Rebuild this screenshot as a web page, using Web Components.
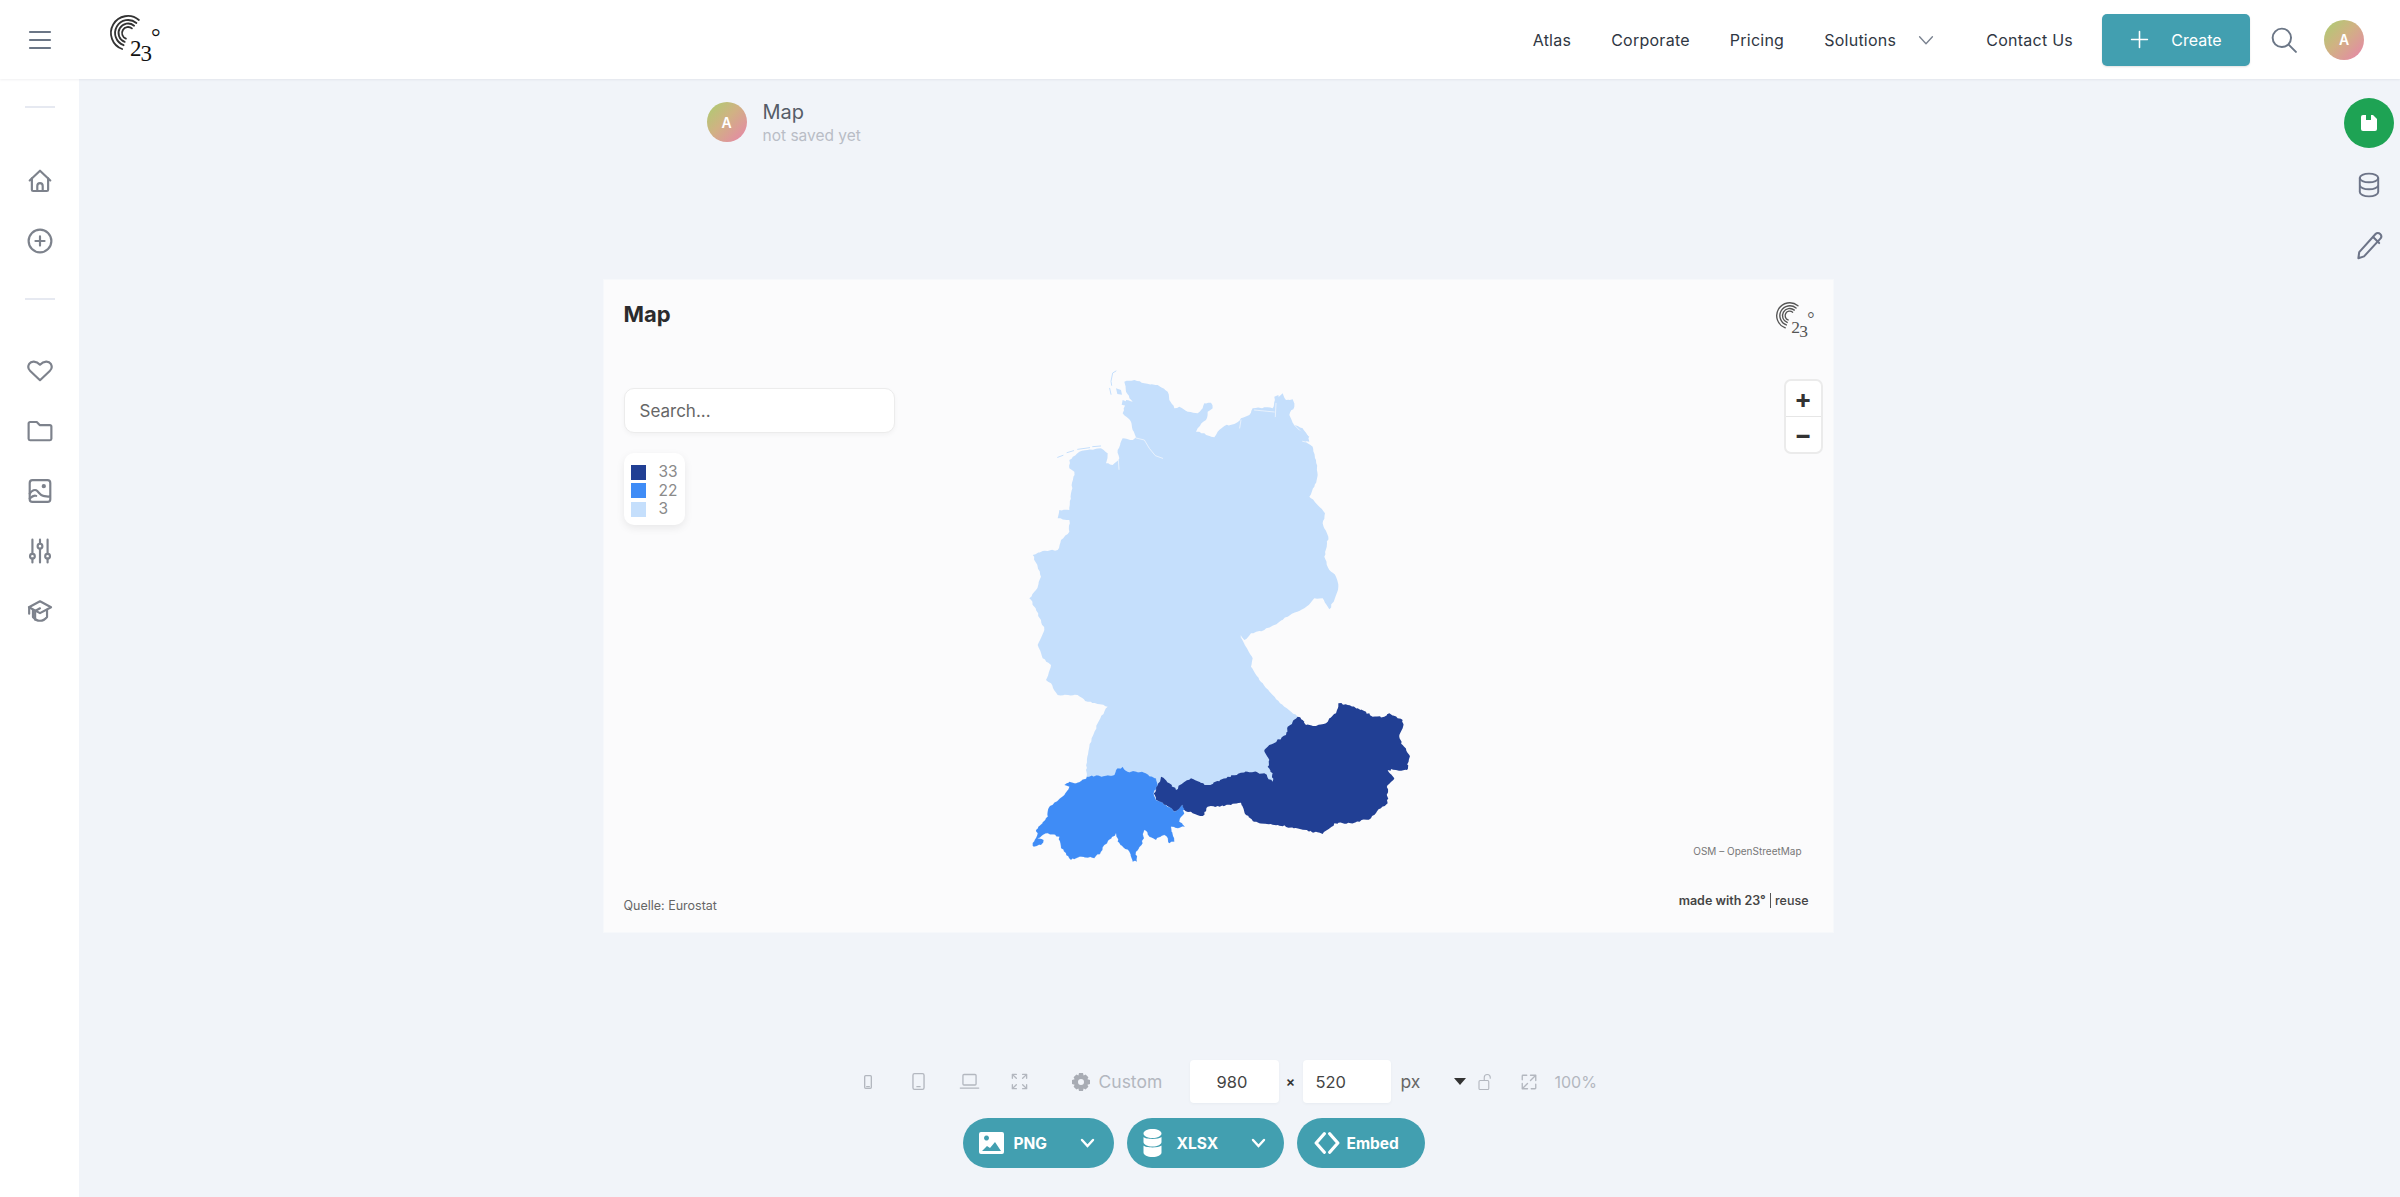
<!DOCTYPE html>
<html lang="en"><head><meta charset="utf-8"><title>Map</title>
<style>
html,body{margin:0;height:100%;background:#f1f4f9}
body{font-family:Inter,"Noto Sans",sans-serif}
</style></head>
<body>
<app-shell>
  <top-bar slot="top"></top-bar>
  <side-bar slot="side"></side-bar>
  <edit-rail slot="rail"></edit-rail>
  <doc-head></doc-head>
  <chart-card></chart-card>
  <tool-bar></tool-bar>
</app-shell>
<script>
const ICONS={
 menu:'<path d="M2 4h20M2 12h20M2 20h20"/>',
 home:'<path d="M2.5 11.5 12 2.5l9.5 9"/><path d="M4.5 9.5V20a1.2 1.2 0 0 0 1.2 1.2h12.6a1.2 1.2 0 0 0 1.2-1.2V9.5"/><path d="M9.5 21v-4.5a2.5 2.5 0 0 1 5 0V21"/>',
 plusc:'<circle cx="12" cy="12" r="10.5"/><path d="M12 7.8v8.4M7.8 12h8.4"/>',
 heart:'<path d="M12 20.5 3 12a5.3 5.3 0 0 1-1-6.5C3.800 2.700 8.500 2.500 12 6.200 15.500 2.500 20.200 2.700 22 5.500A5.300 5.300 0 0 1 21 12z"/>',
 folder:'<path d="M1.500 5a1.300 1.300 0 0 1 1.300-1.300h6.200L11.700 6.500h9.500A1.300 1.300 0 0 1 22.500 7.800v11.400a1.300 1.300 0 0 1-1.300 1.300H2.800a1.300 1.300 0 0 1-1.300-1.300z"/>',
 image:'<rect x="2.500" y="2" width="19" height="20" rx="2.500"/><circle cx="15.500" cy="7.500" r="1"/><path d="M2.500 14.500c2-3 5-4.500 7-2.500s3 4 5.500 4.500 4 1 6 .5M2.500 19c2-2 4-3.500 6-2.500"/>',
 sliders:'<path d="M5 1.500v13M5 19v3.500M12 1.500v3.500M12 10v12.500M19 1.500v13M19 19v3.500"/><circle cx="5" cy="16.800" r="2.200"/><circle cx="12" cy="7.500" r="2.200"/><circle cx="19" cy="16.800" r="2.200"/>',
 cap:'<path d="M12 3 1.800 8.500 12 14l10.200-5.500z"/><path d="M5.500 11v6.500C7.500 20 10 21 12 21s4.500-1 6.500-3.500V11"/><path d="M12 9.500 7.500 12v8"/><path d="M2 8.500v6"/>',
 search:'<circle cx="10" cy="10" r="8.500"/><path d="m16.500 16.500 6.500 6.500"/>',
 chev:'<path d="m5 8.500 7 7.500 7-7.500"/>',
 plus:'<path d="M12 2v20M2 12h20"/>',
 db:'<ellipse cx="12" cy="5.500" rx="8.500" ry="4"/><path d="M3.500 5.500v13c0 2.200 3.800 4 8.500 4s8.500-1.800 8.500-4v-13M3.500 12c0 2.200 3.800 4 8.500 4s8.500-1.800 8.500-4"/>',
 pencil:'<path d="M17 2.500c1-1 2.800-1 3.800 0s1.200 2.700.2 3.800L7.500 21 2.800 22.500 3.500 17.500z"/><path d="m15 5 5 5"/>',
 phone:'<rect x="7" y="2.500" width="10" height="19" rx="1.500"/><path d="M10 19h4"/>',
 tablet:'<rect x="5" y="2" width="14" height="20" rx="2"/><path d="M10 18.500h4"/>',
 laptop:'<rect x="4.500" y="4" width="15" height="12" rx="1.200"/><path d="M1.500 19.500h21"/>',
 expand:'<path d="M3 8V3h5M16 3h5v5M21 16v5h-5M8 21H3v-5M3 3l5 5M21 3l-5 5M21 21l-5-5M3 21l5-5"/>',
 lock:'<rect x="4" y="10" width="13" height="12" rx="1.500"/><path d="M11 10V6a4 4 0 0 1 8 0v1"/>',
 resize:'<path d="M14 3h7v7M21 3l-7 7M10 21H3v-7M3 21l7-7M3 9V4a1 1 0 0 1 1-1h5M21 15v5a1 1 0 0 1-1 1h-5"/>',
 code:'<path d="M9.500 3.500 2 12l7.500 8.500M14.500 3.500 22 12l-7.500 8.500"/>'
};
function define(name,css,html,init){
  customElements.define(name,class extends HTMLElement{
    constructor(){super();const r=this.attachShadow({mode:'open'});
      r.innerHTML='<style>'+css+'</style>'+(typeof html==='function'?html(this):html);
      if(init)init(r,this);}
  });
}
define('ui-icon',':host{display:inline-flex;line-height:0}svg{display:block;fill:none;stroke:currentColor;stroke-linecap:round;stroke-linejoin:round}',
 el=>{const s=el.getAttribute('size')||24,w=el.getAttribute('w')||2;
  return `<svg width="${s}" height="${s}" viewBox="0 0 24 24" stroke-width="${w}">${ICONS[el.getAttribute('name')]}</svg>`});
define('brand-logo',':host{display:block;line-height:0}svg{display:block;overflow:visible}text{font-family:"Liberation Serif",serif}',
 el=>{const s=+el.getAttribute('scale')||1,c=el.getAttribute('color')||'#333';
  return `<svg width="${50*s}" height="${47*s}" viewBox="0 0 50 47"><g fill="none" stroke="${c}" stroke-width="1.800" stroke-linecap="round">
  <path d="M28.900 5A17 17 0 1 0 12.200 34"/><path d="M26.400 8A13 13 0 1 0 13.600 30.200"/><path d="M24.100 10.700A9.500 9.500 0 1 0 14.700 26.900"/><path d="M21.900 13.400A6 6 0 1 0 15.900 23.600"/></g>
  <text x="20" y="41" font-size="23" letter-spacing="-1" fill="${c=='#333'?'#111':c}"><tspan>2</tspan><tspan dy="5">3</tspan><tspan dy="-16" font-size="24">°</tspan></text></svg>`});
define('user-avatar',`:host{display:flex;align-items:center;justify-content:center;width:40px;height:40px;border-radius:50%;
  background:linear-gradient(135deg,#aace70 0%,#d0b283 45%,#e883ab 100%);color:#fff;font:600 14px Inter,sans-serif;flex:none}`,'A');

define('app-shell',`:host{display:grid;grid-template:79px 1fr/79px 1fr 56px;height:100vh;overflow:hidden;background:#f1f4f9}
 ::slotted([slot=top]){grid-column:1/4;grid-row:1}
 ::slotted([slot=side]){grid-column:1;grid-row:2}
 ::slotted([slot=rail]){grid-column:3;grid-row:2}
 main{grid-column:2;grid-row:2;display:flex;flex-direction:column;align-items:center;padding-left:13px;min-width:0}`,
 '<slot name="top"></slot><slot name="side"></slot><main><slot></slot></main><slot name="rail"></slot>');

define('top-bar',`:host{display:flex;align-items:center;background:#fff;box-shadow:0 1px 2px rgba(60,70,90,.08);position:relative;z-index:2;height:79px}
 .menu{margin-left:28px;color:#6b7686;display:flex}
 brand-logo{margin-left:58px;margin-top:-3px}
 nav{margin-left:auto;display:flex;align-items:center;font:400 16px Inter,sans-serif;color:#2f3743;letter-spacing:.25px}
 nav a{display:block}
 nav ui-icon{color:#7a8290;margin-left:19px}
 .btn{margin-left:29px;width:148px;height:52px;box-sizing:border-box;background:#429fb0;color:#fff;border-radius:5px;display:flex;align-items:center;justify-content:center;gap:22px;font:400 16px Inter,sans-serif;box-shadow:0 1px 2px rgba(0,0,0,.12)}
 .s{margin-left:21px;color:#6b7686;display:flex}
 user-avatar{margin-left:27px;margin-right:36px}`,
 `<span class="menu"><ui-icon name="menu" size="24" w="2.200"></ui-icon></span>
 <brand-logo></brand-logo>
 <nav><a>Atlas</a><a style="margin-left:40px">Corporate</a><a style="margin-left:40px">Pricing</a><a style="margin-left:40px">Solutions</a><ui-icon name="chev" size="22" w="1.500"></ui-icon><a style="margin-left:49px">Contact Us</a></nav>
 <div class="btn"><ui-icon name="plus" size="19" w="2"></ui-icon><span>Create</span></div>
 <span class="s"><ui-icon name="search" size="26" w="1.800"></ui-icon></span>
 <user-avatar></user-avatar>`);

define('side-bar',`:host{display:flex;flex-direction:column;align-items:center;background:#fff;color:#7d828c;padding-top:27px;box-sizing:border-box}
 hr{width:30px;height:2px;border:0;background:#e6e9f1;margin:0}
 .g{display:flex;flex-direction:column;align-items:center;gap:34px}`,
 `<hr><div class="g" style="margin-top:60px"><ui-icon name="home" size="26"></ui-icon><ui-icon name="plusc" size="26"></ui-icon></div>
 <hr style="margin-top:44px"><div class="g" style="margin-top:58px"><ui-icon name="heart" size="26"></ui-icon><ui-icon name="folder" size="26"></ui-icon><ui-icon name="image" size="26"></ui-icon><ui-icon name="sliders" size="26"></ui-icon><ui-icon name="cap" size="26"></ui-icon></div>`);

define('edit-rail',`:host{display:flex;flex-direction:column;align-items:flex-start;padding-top:19px;color:#6d7488}
 .o{width:50px;height:50px;border-radius:50%;background:#1ea354;display:flex;align-items:center;justify-content:center;margin-bottom:24px}
 .i{width:50px;display:flex;justify-content:center;margin-bottom:33px}`,
 `<div class="o"><svg width="18" height="18" viewBox="0 0 18 18"><path fill="#fff" d="M1 3a2 2 0 0 1 2-2h10l4 4v10a2 2 0 0 1-2 2H3a2 2 0 0 1-2-2z"/><rect x="6" y="1" width="5" height="5" fill="#1ea354"/></svg></div>
 <div class="i"><ui-icon name="db" size="26" w="1.800"></ui-icon></div><div class="i"><ui-icon name="pencil" size="29" w="1.700"></ui-icon></div>`);

define('doc-head',`:host{display:flex;gap:16px;width:1229px;box-sizing:border-box;padding:23px 0 0 103px;height:201px;align-items:flex-start}
 .t{font:400 20px/24px Inter,sans-serif;color:#555c68;margin-top:-2px}
 .s{font:400 15.500px/20px Inter,sans-serif;color:#b9bdc6;margin-top:2px}`,
 `<user-avatar></user-avatar><div><div class="t">Map</div><div class="s">not saved yet</div></div>`);

define('geo-map',`:host{display:block;position:absolute;inset:0;pointer-events:none}svg{display:block}`,
 `<svg width="1229" height="652" viewBox="0 0 1229 652"><g id="m" transform="translate(397 70) scale(.33333)"></g></svg>`,
 (r)=>{
  let seed=7;const rnd=()=>{seed=(seed*16807)%2147483647;return seed/2147483647-.5};
  const rough=(p,amp,step)=>{let o=[];for(let i=0;i<p.length;i++){const a=p[i],b=p[(i+1)%p.length];
     const d=Math.hypot(b[0]-a[0],b[1]-a[1]),n=Math.max(1,Math.round(d/step));
     for(let k=0;k<n;k++){const t=k/n,j=k?amp:0;o.push([(a[0]+(b[0]-a[0])*t+rnd()*j).toFixed(1),(a[1]+(b[1]-a[1])*t+rnd()*j).toFixed(1)])}}
     return 'M'+o.map(q=>q.join(' ')).join('L')+'Z'};
  const y6=a=>a.map(q=>[q[0],q[1]+960]);
  const de=[[370,95],[400,90],[430,100],[470,105],[500,125],[505,150],[520,175],[535,170],[560,185],[590,190],[605,175],[610,160],[630,158],[635,175],[620,185],[615,210],[590,235],[585,245],[610,250],[640,262],[650,245],[670,228],[700,222],[720,205],[745,195],[755,175],[790,172],[815,175],[822,150],[845,130],[855,150],[875,148],[880,170],[865,195],[880,225],[905,235],[925,260],[915,275],[935,290],[945,330],[950,375],[940,410],[925,440],[945,460],[972,490],[965,520],[982,560],[970,620],[985,660],[1005,680],[1012,710],[1000,750],[985,778],[965,745],[940,745],[910,775],[860,800],[820,825],[790,840],[750,850],[730,870],[718,860],[735,890],[755,925],[750,950],[775,990],[810,1030],[850,1070],[890,1100],[900,1130],[830,1200],[830,1300],[740,1310],[620,1330],[520,1345],[480,1330],[440,1300],[380,1300],[258,1310],[255,1260],[265,1190],[290,1120],[320,1070],[260,1055],[230,1035],[170,1035],[150,1000],[135,990],[150,945],[125,925],[110,885],[130,840],[120,810],[100,770],[85,745],[105,720],[120,680],[110,650],[95,615],[125,603],[170,600],[180,570],[205,545],[205,510],[170,505],[175,480],[205,480],[210,430],[220,365],[205,355],[205,330],[235,305],[300,295],[320,310],[315,340],[335,345],[355,325],[350,300],[365,265],[395,270],[405,262],[395,240],[390,215],[365,190],[375,150],[395,155],[375,125]];
  const at=y6([[890,140],[905,150],[915,165],[945,168],[975,160],[985,145],[1005,130],[1012,100],[1040,105],[1070,115],[1095,125],[1115,140],[1150,140],[1165,130],[1205,150],[1205,175],[1195,195],[1205,225],[1225,255],[1218,300],[1185,300],[1160,300],[1180,325],[1160,345],[1160,400],[1140,415],[1110,445],[1050,460],[1000,460],[965,492],[900,478],[830,465],[760,455],[735,435],[720,398],[690,405],[650,408],[620,410],[605,438],[575,430],[550,420],[535,420],[520,425],[495,405],[465,390],[458,370],[470,345],[480,320],[505,340],[525,360],[545,340],[570,325],[620,345],[680,320],[740,305],[790,310],[815,335],[815,310],[800,290],[805,270],[790,240],[800,230],[855,195],[860,170]]);
  const ch=y6([[258,320],[340,315],[345,300],[365,290],[380,305],[430,308],[465,325],[470,345],[458,370],[465,390],[495,405],[520,425],[545,405],[550,430],[535,455],[552,470],[530,475],[510,470],[520,515],[505,520],[490,495],[465,510],[445,500],[430,480],[425,520],[405,545],[408,575],[395,575],[385,545],[350,515],[345,490],[320,515],[300,545],[280,565],[240,560],[210,570],[180,535],[175,500],[140,490],[110,505],[128,510],[120,525],[95,528],[110,490],[105,480],[140,440],[145,410],[190,375],[205,350],[190,345],[205,335],[225,340]]);
  const L='#c5dffc';
  let h=`<path fill="${L}" d="${rough(de,4,8)}"/>`;
  h+=`<path fill="#213f94" d="${rough(at,6,7)}"/><path fill="#3f8cf6" stroke="#fff" stroke-opacity=".35" stroke-width="1" d="${rough(ch,6,7)}"/>`;
  h+=`<g fill="none" stroke="#fbfbfc" stroke-width="2" stroke-linecap="round"><path d="M405 264l25 6 15 25 18 22 22 8"/><path d="M352 330l2 28"/><path d="M720 210l-4 24M760 180l60 6M825 160l-2 40M880 225l30 30M925 278l-20-4"/><path d="M720 858l14 30"/></g>`;
  h+=`<g fill="none" stroke="${L}" stroke-width="3" stroke-linecap="round"><path d="M345 63l-10 6-5 25 2 12M326 115l4 18"/><path d="M170 322l16-6M198 308l20-6M230 298l36-5M275 290l24-2"/></g>`;
  h+=`<g fill="${L}"><path d="M345 115l15 5 3 14-14-2zM365 150l15 6-2 12-16-4z"/><path d="M820 140l12-5 3 15-12 8zM895 240l25 15 5 20-12-2-18-18z"/></g>`;
  r.getElementById('m').innerHTML=h;
 });

define('chart-card',`:host{display:flex;flex-direction:column;position:relative;width:1229px;height:652px;box-sizing:border-box;background:#fbfbfc;padding:20px 20px 0;flex:none;color:#333;box-shadow:0 0 0 1px #f6f8fb}
 header,.mid,footer{position:relative}
 header{display:flex;justify-content:space-between;align-items:flex-start;height:88px}
 h1{margin:0;font:700 22px/28px Inter,sans-serif;color:#2b2b2d}
 brand-logo{margin-top:2px;margin-right:-1px}
 .mid{display:flex;justify-content:space-between;align-items:flex-start;flex:1}
 .search{width:271px;height:45px;box-sizing:border-box;background:#fff;border:1px solid #ececec;border-radius:10px;padding:0 15px;display:flex;align-items:center;font:400 17px Inter,sans-serif;color:#666;box-shadow:0 2px 5px rgba(0,0,0,.04)}
 .legend{margin-top:20px;width:61px;height:72px;box-sizing:border-box;background:#fff;border-radius:10px;box-shadow:0 3px 9px rgba(0,0,0,.08);padding:10px 0 0 7px;font:400 15.500px/18.500px Inter,sans-serif;color:#8a8a8a}
 .legend div{display:flex;align-items:center;gap:13px;height:18.500px}
 .legend i{width:15px;height:15px;display:block}
 .zoom{width:39px;height:75px;box-sizing:border-box;margin:-9px -10px 0 0;border:2px solid #ebebeb;border-radius:7px;background:#fff;display:flex;flex-direction:column;font:700 26px/1 Inter,sans-serif;color:#333}
 .zoom span{flex:1;display:flex;align-items:center;justify-content:center}
 .zoom span+span{border-top:1px solid #e6e6e6}
 .r{display:flex;flex-direction:column;align-items:flex-end;height:100%}
 .osm{margin-top:auto;margin-right:11px;margin-bottom:22px;font:400 10px/14px Inter,sans-serif;color:#777}
 .made{position:absolute;right:24px;bottom:23px;font:600 12.500px/16px Inter,sans-serif;color:#444}
 .made b{font-weight:500;border-left:1px solid #555;padding-left:4px;margin-left:1px}
 footer{height:52px;font:400 12.500px/16px Inter,sans-serif;color:#666;padding-top:18px;box-sizing:border-box}`,
 `<geo-map></geo-map>
 <header><h1>Map</h1><brand-logo scale=".76" color="#555"></brand-logo></header>
 <div class="mid"><div><div class="search">Search...</div>
 <div class="legend"><div><i style="background:#213f94"></i>33</div><div><i style="background:#3f8cf6"></i>22</div><div><i style="background:#c5dffc"></i>3</div></div></div>
 <div class="r"><div class="zoom"><span>+</span><span>−</span></div><div class="osm">OSM – OpenStreetMap</div></div></div>
 <footer>Quelle: Eurostat</footer><div class="made">made with 23° <b>reuse</b></div>`);

define('tool-bar',`:host{display:block;width:1229px;flex:none;margin-top:128px}
 .a{display:flex;align-items:center;height:43px;padding-left:256px;color:#b3b7bf;font:400 17.500px Inter,sans-serif}
 .a ui-icon{color:#b3b7bf}
 .box{background:#fff;height:43px;border-radius:4px;display:flex;align-items:center;box-shadow:0 1px 3px rgba(60,70,90,.05);color:#444;font:400 16.500px Inter,sans-serif;box-sizing:border-box}
 .b{display:flex;gap:13px;padding-left:359px;margin-top:15px}
 .p{height:50px;border-radius:25px;background:#429fb0;color:#fff;display:flex;align-items:center;font:700 15.500px Inter,sans-serif;box-sizing:border-box;flex:none}
 svg.w{display:block}`,
 `<div class="a"><ui-icon name="phone" size="16" w="2"></ui-icon><ui-icon style="margin-left:33px" name="tablet" size="19" w="1.700"></ui-icon><ui-icon style="margin-left:31px" name="laptop" size="21" w="1.500"></ui-icon><ui-icon style="margin-left:30px" name="expand" size="19" w="1.700"></ui-icon>
 <svg style="margin-left:42px" width="20" height="20" viewBox="0 0 20 20"><path fill="#a8acb4" fill-rule="evenodd" d="M8 1h4l.6 2.500 2-1 2.800 2.800-1 2L19 8v4l-2.600.7 1 2-2.800 2.800-2-1L12 19H8l-.6-2.500-2 1-2.800-2.800 1-2L1 12V8l2.600-.7-1-2 2.800-2.800 2 1zM10 7a3 3 0 1 0 0 6 3 3 0 0 0 0-6z"/></svg>
 <span style="margin-left:8px;width:91px">Custom</span>
 <div class="box" style="width:89px;padding-left:27px">980</div><span style="width:24px;text-align:center;color:#333;font-size:14px;font-weight:600">×</span><div class="box" style="width:88px;padding-left:13px">520</div>
 <span style="margin-left:10px;color:#666;width:53px">px</span>
 <svg width="12" height="7" viewBox="0 0 12 7"><path d="M0 0h12L6 7z" fill="#333"/></svg>
 <ui-icon style="margin-left:10px" name="lock" size="18" w="1.500"></ui-icon><ui-icon style="margin-left:26px" name="resize" size="18" w="1.800"></ui-icon>
 <span style="margin-left:17px;font-size:16px">100%</span></div>
 <div class="b">
 <div class="p" style="width:151px;padding-left:16px"><svg class="w" width="25" height="22" viewBox="0 0 25 22"><path fill="#fff" fill-rule="evenodd" d="M2 0h21a2 2 0 0 1 2 2v18a2 2 0 0 1-2 2H2a2 2 0 0 1-2-2V2a2 2 0 0 1 2-2zm3 6a2.500 2.500 0 1 0 0-.01zM3 19h19l-6-9-5 6-3-2z"/></svg><span style="margin-left:10px">PNG</span><svg style="margin-left:33px" width="15" height="10" viewBox="0 0 15 10"><path d="m2 2 5.500 6L13 2" fill="none" stroke="#fff" stroke-width="2.400" stroke-linecap="round"/></svg></div>
 <div class="p" style="width:157px;padding-left:16px"><svg class="w" width="19" height="30" viewBox="0 0 19 30"><path fill="#fff" d="M9.500 1C14.500 1 18.500 3 18.500 5.500S14.500 10 9.500 10 .5 8 .5 5.500 4.500 1 9.500 1zM.5 9c2 2.500 15.500 2.500 18 0v5c0 2.500-4 4.500-9 4.500s-9-2-9-4.500zm0 8.500c2 2.500 15.500 2.500 18 0v7c0 2.500-4 4.500-9 4.500s-9-2-9-4.500z"/></svg><span style="margin-left:15px">XLSX</span><svg style="margin-left:33px" width="15" height="10" viewBox="0 0 15 10"><path d="m2 2 5.500 6L13 2" fill="none" stroke="#fff" stroke-width="2.400" stroke-linecap="round"/></svg></div>
 <div class="p" style="width:128px;padding-left:17px"><ui-icon name="code" size="26" w="3"></ui-icon><span style="margin-left:7px">Embed</span></div>
 </div>`);
</script>
</body></html>
